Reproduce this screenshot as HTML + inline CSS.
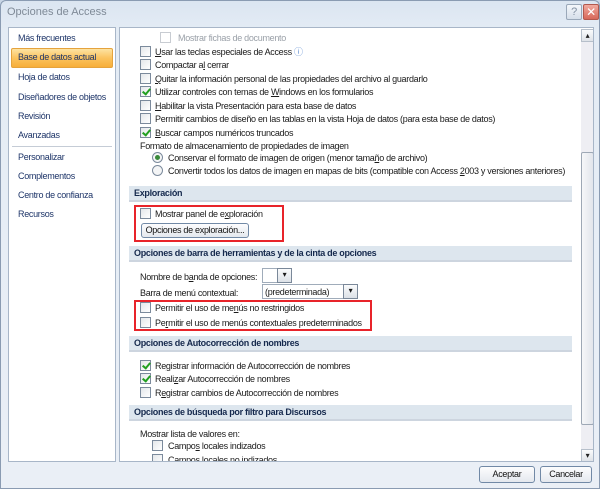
<!DOCTYPE html>
<html><head><meta charset="utf-8"><style>
*{margin:0;padding:0;box-sizing:border-box}
body{width:600px;height:489px;overflow:hidden;font-family:"Liberation Sans","DejaVu Sans",sans-serif;font-size:9px;letter-spacing:-0.3px;color:#1a1a1a;background:#c9d6e6;position:relative}
.win{position:absolute;left:0;top:0;width:600px;height:489px;background:linear-gradient(#dbe5f1,#e4ecf5 30px,#eaeff6);border:1px solid #8a9bb2;border-radius:6px 6px 0 0}
.title{position:absolute;left:6px;top:5px;font-size:11px;color:#7f8a97;letter-spacing:0}
.help{position:absolute;left:565px;top:3px;width:16px;height:16px;border:1px solid #9aa8b9;border-radius:2px;background:linear-gradient(#f4f7fb,#d6dfea);color:#8391a3;font-size:11px;text-align:center;line-height:14px}
.close{position:absolute;left:582px;top:3px;width:16px;height:16px;border:1px solid #b2584d;border-radius:2px;background:linear-gradient(#f1aaa0,#d7685a);color:#fff;font-size:12px;text-align:center;line-height:14px;font-weight:bold}
.nav{position:absolute;left:7px;top:26px;width:108px;height:435px;background:#fff;border:1px solid #a8b6c8}
.nav div{position:absolute;left:9px;color:#1d3468;line-height:12px;white-space:nowrap}
.nav .sel{position:absolute;left:2px;top:20px;width:102px;height:20px;background:linear-gradient(#fde3a2,#fbc35f 50%,#f7ae3a);border:1px solid #e5a33d;border-radius:2px}
.main{position:absolute;left:118px;top:26px;width:475px;height:435px;background:#fff;border:1px solid #a8b6c8;overflow:hidden}
.main .t{position:absolute;white-space:nowrap;line-height:12px}
.cb{position:absolute;width:11px;height:11px;border:1px solid #7b8a9c;background:linear-gradient(135deg,#e4e7ea,#fff)}
.cb.k::after{content:"";position:absolute;left:3px;top:0px;width:3px;height:6px;border:solid #22a020;border-width:0 2px 2px 0;transform:rotate(40deg)}
.rb{position:absolute;width:11px;height:11px;border:1px solid #7b8a9c;border-radius:50%;background:#f4f5f6}
.rb.k::after{content:"";position:absolute;left:2px;top:2px;width:5px;height:5px;border-radius:50%;background:#3a8a3a}
.hd{position:absolute;left:9px;width:443px;height:16px;background:#dde6ee;border-bottom:2px solid #cdd5df;color:#15294d;font-weight:bold;padding:0 0 0 5px;line-height:14px}
.red{position:absolute;border:2px solid #e8242a}
.btn{position:absolute;border:1px solid #7189a6;border-radius:3px;background:linear-gradient(#fdfdfe,#e4e8ee);text-align:center;color:#111;white-space:nowrap}
.sb{position:absolute;left:461px;top:1px;width:13px;height:433px;background:#eeeef3}
.sbb{position:absolute;left:0;width:13px;height:13px;border:1px solid #b6bfca;background:linear-gradient(#fafbfc,#dfe3e8);font-size:8px;text-align:center;line-height:11px;color:#222}
.thumb{position:absolute;left:0;top:123px;width:13px;height:273px;border:1px solid #9ea8b5;border-radius:2px;background:linear-gradient(90deg,#f6f7f9,#e2e5eb)}
.dd{position:absolute;width:15px;height:14px;border:1px solid #7a8899;background:linear-gradient(#fafbfc,#dce1e7);font-size:8px;text-align:center;line-height:12px}
.u{text-decoration:underline}
</style></head><body>
<div class="win">
<div class="title">Opciones de Access</div>
<div class="help">?</div><div class="close">✕</div>
<div class="nav">
<div style="top:4px">Más frecuentes</div>
<div class="sel"></div>
<div style="top:23px">Base de datos actual</div>
<div style="top:43px">Hoja de datos</div>
<div style="top:63px">Diseñadores de objetos</div>
<div style="top:82px">Revisión</div>
<div style="top:101px">Avanzadas</div>
<div style="top:118px;left:3px;width:100px;height:1px;background:#c5ccd6"></div>
<div style="top:123px">Personalizar</div>
<div style="top:142px">Complementos</div>
<div style="top:161px">Centro de confianza</div>
<div style="top:180px">Recursos</div>
</div>
<div class="main">
<div class="cb" style="left:40px;top:4px;border-color:#c8ccd2;background:#fff"></div><div class="t" style="left:58px;top:4px;color:#9aa0a8">Mostrar fichas de documento</div>
<div class="cb" style="left:20px;top:18px"></div><div class="t" style="left:35px;top:18px"><span class="u">U</span>sar las teclas especiales de Access <span style="color:#5b8ad0">ⓘ</span></div>
<div class="cb" style="left:20px;top:31px"></div><div class="t" style="left:35px;top:31px">Compactar a<span class="u">l</span> cerrar</div>
<div class="cb" style="left:20px;top:45px"></div><div class="t" style="left:35px;top:45px"><span class="u">Q</span>uitar la información personal de las propiedades del archivo al guardarlo</div>
<div class="cb k" style="left:20px;top:58px"></div><div class="t" style="left:35px;top:58px">Utilizar controles con temas de <span class="u">W</span>indows en los formularios</div>
<div class="cb" style="left:20px;top:72px"></div><div class="t" style="left:35px;top:72px"><span class="u">H</span>abilitar la vista Presentación para esta base de datos</div>
<div class="cb" style="left:20px;top:85px"></div><div class="t" style="left:35px;top:85px">Permitir cambios de diseño en las tablas en la vista Hoja de datos (para esta base de datos)</div>
<div class="cb k" style="left:20px;top:99px"></div><div class="t" style="left:35px;top:99px"><span class="u">B</span>uscar campos numéricos truncados</div>
<div class="t" style="left:20px;top:112px">Formato de almacenamiento de propiedades de imagen</div>
<div class="rb k" style="left:32px;top:124px"></div><div class="t" style="left:48px;top:124px">Conservar el formato de imagen de origen (menor tama<span class="u">ñ</span>o de archivo)</div>
<div class="rb" style="left:32px;top:137px"></div><div class="t" style="left:48px;top:137px">Convertir todos los datos de imagen en mapas de bits (compatible con Access <span class="u">2</span>003 y versiones anteriores)</div>
<div class="hd" style="top:158px">Exploración</div>
<div class="cb" style="left:20px;top:180px"></div><div class="t" style="left:35px;top:180px">Mostrar panel de e<span class="u">x</span>ploración</div>
<div class="btn" style="left:21px;top:195px;width:108px;height:15px;line-height:13px">Opciones de exploración...</div>
<div class="red" style="left:14px;top:177px;width:150px;height:37px"></div>
<div class="hd" style="top:218px">Opciones de barra de herramientas y de la cinta de opciones</div>
<div class="t" style="left:20px;top:243px">Nombre de b<span class="u">a</span>nda de opciones:</div>
<div style="position:absolute;left:142px;top:240px;width:16px;height:15px;border:1px solid #a0acba;background:#fff"></div><div class="dd" style="left:157px;top:240px;height:15px">▾</div>
<div class="t" style="left:20px;top:259px">Barra de menú contextual:</div>
<div style="position:absolute;left:142px;top:256px;width:82px;height:15px;border:1px solid #a0acba;background:#fff;padding:1px 2px;line-height:12px;white-space:nowrap">(predeterminada)</div><div class="dd" style="left:223px;top:256px;height:15px">▾</div>
<div class="cb" style="left:20px;top:274px"></div><div class="t" style="left:35px;top:274px">Permitir el uso de me<span class="u">n</span>ús no restringidos</div>
<div class="cb" style="left:20px;top:289px"></div><div class="t" style="left:35px;top:289px">Pe<span class="u">r</span>mitir el uso de menús contextuales predeterminados</div>
<div class="red" style="left:14px;top:272px;width:238px;height:31px"></div>
<div class="hd" style="top:308px">Opciones de Autocorrección de nombres</div>
<div class="cb k" style="left:20px;top:332px"></div><div class="t" style="left:35px;top:332px">Re<span class="u">g</span>istrar información de Autocorrección de nombres</div>
<div class="cb k" style="left:20px;top:345px"></div><div class="t" style="left:35px;top:345px">Reali<span class="u">z</span>ar Autocorrección de nombres</div>
<div class="cb" style="left:20px;top:359px"></div><div class="t" style="left:35px;top:359px">R<span class="u">e</span>gistrar cambios de Autocorrección de nombres</div>
<div class="hd" style="top:377px">Opciones de búsqueda por filtro para Discursos</div>
<div class="t" style="left:20px;top:400px">Mostrar lista de valores en:</div>
<div class="cb" style="left:32px;top:412px"></div><div class="t" style="left:48px;top:412px">Campo<span class="u">s</span> locales indizados</div>
<div class="cb" style="left:32px;top:426px"></div><div class="t" style="left:48px;top:426px">Campos locales no indizados</div>
<div class="sb"><div class="sbb" style="top:0">▴</div><div class="thumb"></div><div class="sbb" style="top:420px">▾</div></div>
</div>
<div class="btn" style="left:478px;top:465px;width:56px;height:17px;line-height:15px">Aceptar</div>
<div class="btn" style="left:539px;top:465px;width:52px;height:17px;line-height:15px">Cancelar</div>
</div>
</body></html>
